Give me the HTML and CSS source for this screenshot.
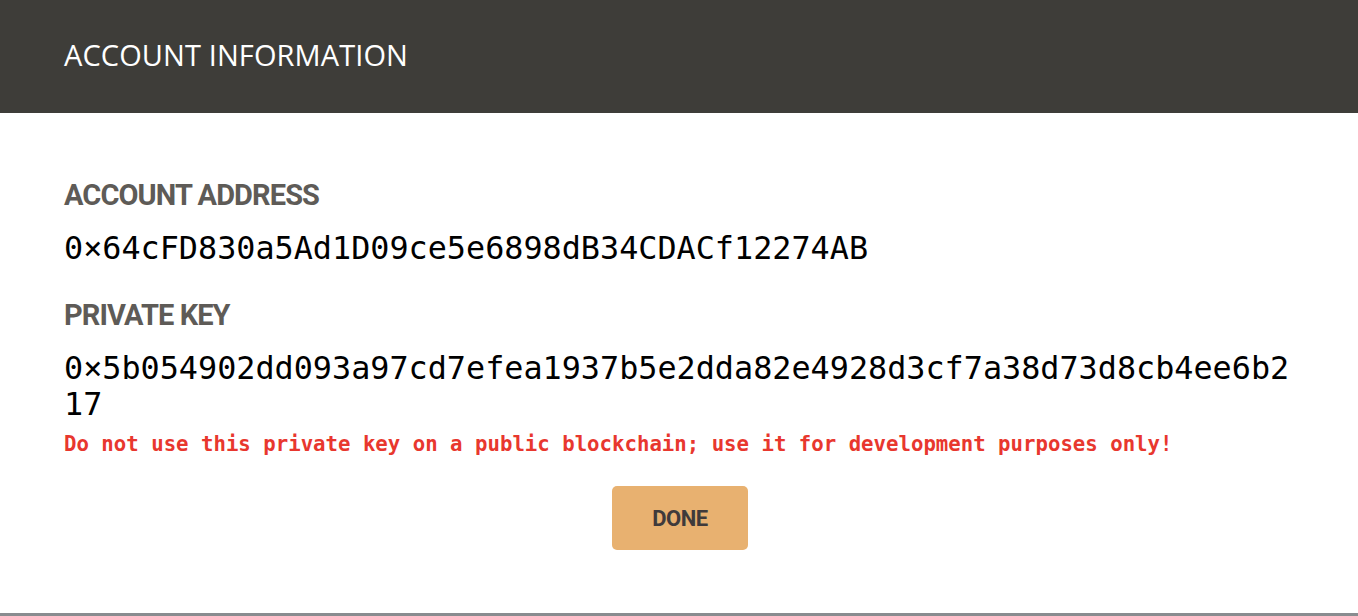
FILE: index.html
```html
<!DOCTYPE html>
<html>
<head>
<meta charset="utf-8">
<link rel="stylesheet" href="styles.css">
</head>
<body>
<div class="modal">
  <header class="modal-header">
    <h1 class="modal-title">ACCOUNT INFORMATION</h1>
  </header>
  <section class="modal-body">
    <h2 class="label label-first">ACCOUNT ADDRESS</h2>
    <div class="value">0×64cFD830a5Ad1D09ce5e6898dB34CDACf12274AB</div>
    <h2 class="label label-second">PRIVATE KEY</h2>
    <div class="value value-key">0×5b054902dd093a97cd7efea1937b5e2dda82e4928d3cf7a38d73d8cb4ee6b217</div>
    <p class="warning">Do not use this private key on a public blockchain; use it for development purposes only!</p>
    <div class="actions">
      <button class="btn-done">DONE</button>
    </div>
  </section>
</div>
</body>
</html>
```
FILE: styles.css
```css
html, body {
  margin: 0;
  padding: 0;
}
body {
  background: #898c8f;
  width: 1358px;
  height: 616px;
  overflow: hidden;
}
.modal {
  background: #ffffff;
  height: 613px;
  display: flex;
  flex-direction: column;
}
.modal-header {
  background: #3e3d39;
  height: 113px;
  display: flex;
  align-items: center;
  padding: 0 64px;
  box-sizing: border-box;
}
.modal-title {
  margin: 0;
  color: #ffffff;
  font-family: "Open Sans", "Noto Sans", sans-serif;
  font-weight: 400;
  font-size: 29px;
  letter-spacing: 0.1px;
  padding-bottom: 4px;
}
.modal-body {
  padding: 0 64px;
  display: flex;
  flex-direction: column;
}
.label {
  margin: 0;
  font-family: "Roboto", sans-serif;
  font-weight: 700;
  font-size: 29px;
  line-height: 34px;
  color: #5e5b57;
  letter-spacing: -0.9px;
}
.label-first {
  margin-top: 65px;
}
.label-second {
  margin-top: 32px;
}
.value {
  margin-top: 18px;
  font-family: "DejaVu Sans Mono", "Liberation Mono", monospace;
  font-size: 31.8px;
  line-height: 36px;
  color: #000000;
  word-break: break-all;
}
.warning {
  margin: 9px 0 0;
  font-family: "DejaVu Sans Mono", "Liberation Mono", monospace;
  font-weight: 700;
  font-size: 20.7px;
  line-height: 26px;
  color: #e8372e;
}
.actions {
  display: flex;
  justify-content: center;
  margin-top: 29px;
}
.btn-done {
  width: 136px;
  height: 64px;
  margin-left: 2px;
  border: none;
  border-radius: 5px;
  background: #e8b170;
  color: #3f3a3b;
  font-family: "Roboto", sans-serif;
  font-weight: 700;
  font-size: 22px;
  letter-spacing: -0.5px;
  padding: 0;
}
```
